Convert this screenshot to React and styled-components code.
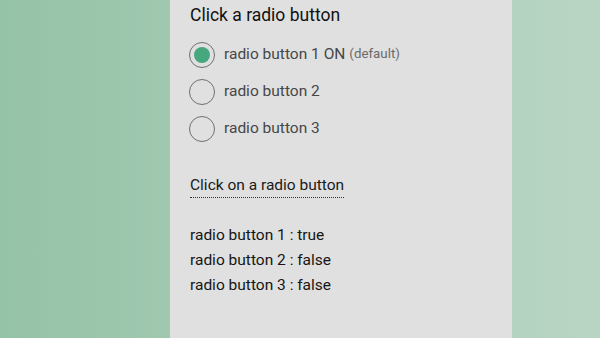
import React, { useState } from 'react'
import styled, { createGlobalStyle } from 'styled-components'

const GlobalStyle = createGlobalStyle`
  html, body {
    margin: 0;
    padding: 0;
  }
  body {
    font-family: Roboto, "Liberation Sans", sans-serif;
    background: linear-gradient(to right, #95c3a7, #b9d5c4);
    height: 338px;
    overflow: hidden;
  }
`

const Page = styled.div`
  display: grid;
  grid-template-columns: 170px 342px 1fr;
  height: 338px;
`

const Panel = styled.main`
  grid-column: 2;
  background: #e0e0e0;
  padding: 5px 20px 0 20px;
  box-sizing: border-box;
`

const Title = styled.h2`
  margin: 0;
  font-size: 17.5px;
  font-weight: 400;
  line-height: 20px;
  color: #111;
`

const RadioList = styled.div`
  display: flex;
  flex-direction: column;
  margin-top: 11px;
`

const RadioRow = styled.label`
  display: flex;
  align-items: center;
  height: 37px;
  cursor: pointer;
`

const Circle = styled.span`
  width: 26px;
  height: 26px;
  box-sizing: border-box;
  border: 1px solid #707070;
  border-radius: 50%;
  display: flex;
  align-items: center;
  justify-content: center;
  margin-left: -1px;
  margin-right: 9px;

  &::after {
    content: '';
    width: 16px;
    height: 16px;
    border-radius: 50%;
    background: ${p => (p.$on ? '#47a77f' : 'transparent')};
  }
`

const Label = styled.span`
  font-size: 15.5px;
  color: #474747;
  margin-top: -2px;
`

const Note = styled.span`
  font-size: 13.3px;
  color: #6a6a6a;
  margin-left: 4px;
  margin-top: -2px;
`

const Prompt = styled.div`
  display: inline-block;
  margin-top: 29px;
  font-size: 15.5px;
  line-height: 18px;
  color: #1a1a1a;
  padding-bottom: 3px;
  border-bottom: 1px dotted #333;
`

const Results = styled.div`
  margin-top: 25px;
`

const ResultLine = styled.div`
  font-size: 15.5px;
  line-height: 25px;
  color: #151515;
`

const labels = ['radio button 1', 'radio button 2', 'radio button 3']

export default function App() {
  const [selected, setSelected] = useState(0)
  return (
    <Page>
      <GlobalStyle />
      <Panel>
        <Title>Click a radio button</Title>
        <RadioList>
          {labels.map((l, i) => (
            <RadioRow key={l} onClick={() => setSelected(i)}>
              <Circle $on={selected === i} />
              <Label>
                {l}
                {i === 0 && ' ON'}
              </Label>
              {i === 0 && <Note>(default)</Note>}
            </RadioRow>
          ))}
        </RadioList>
        <Prompt>Click on a radio button</Prompt>
        <Results>
          {labels.map((l, i) => (
            <ResultLine key={l}>
              {l} : {selected === i ? 'true' : 'false'}
            </ResultLine>
          ))}
        </Results>
      </Panel>
    </Page>
  )
}
